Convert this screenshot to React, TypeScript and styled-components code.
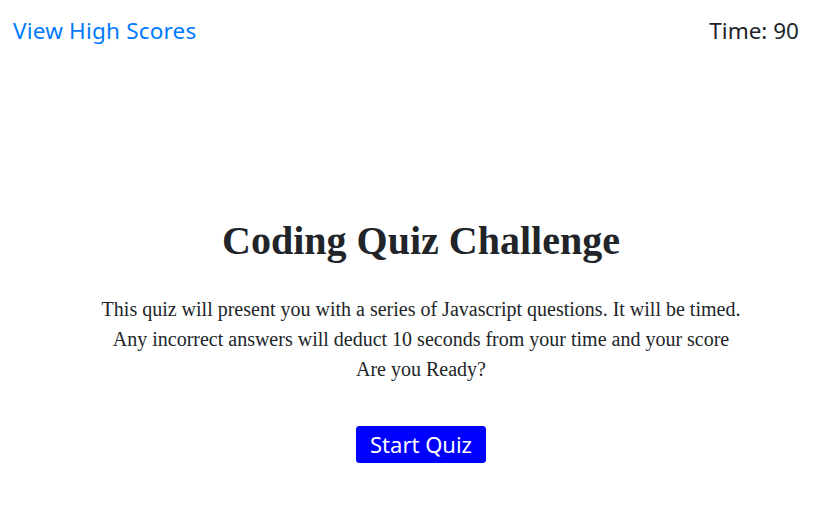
import React from "react";
import styled, { createGlobalStyle } from "styled-components";

const Global = createGlobalStyle`
  html, body { margin: 0; padding: 0; background: #fff; }
  body { font-family: "Liberation Serif", serif; color: #212529; }
`;

const Page = styled.div`
  width: 828px;
  height: 510px;
  display: flex;
  flex-direction: column;
`;

const Header = styled.header`
  display: flex;
  justify-content: space-between;
  align-items: center;
  padding: 15px 29px 0 13px;
  height: 30px;
  font-family: "Noto Sans", sans-serif;
  font-size: 22.5px;
`;

const HighScores = styled.a`
  color: #007bff;
  text-decoration: none;
  cursor: pointer;
  letter-spacing: 0.2px;
`;

const Timer = styled.div`
  color: #212529;
`;

const Main = styled.main`
  display: flex;
  flex-direction: column;
  align-items: center;
  padding: 172px 0 0 14px;
`;

const Title = styled.h1`
  margin: 0;
  font-family: "Liberation Serif", serif;
  font-weight: bold;
  font-size: 40px;
  line-height: 48px;
`;

const Intro = styled.p`
  margin: 29px 0 0;
  text-align: center;
  font-size: 20px;
  line-height: 30px;
`;

const StartButton = styled.button`
  margin-top: 42px;
  background: #0000ff;
  color: #fff;
  border: 1px solid #0000ff;
  border-radius: 3px;
  font-family: "Noto Sans", sans-serif;
  font-size: 22px;
  line-height: 35px;
  padding: 0 13px;
  cursor: pointer;
`;

export default function App() {
  return (
    <>
      <Global />
      <Page>
        <Header>
          <HighScores>View High Scores</HighScores>
          <Timer>Time: 90</Timer>
        </Header>
        <Main>
          <Title>Coding Quiz Challenge</Title>
          <Intro>
            This quiz will present you with a series of Javascript questions. It will be timed.
            <br />
            Any incorrect answers will deduct 10 seconds from your time and your score
            <br />
            Are you Ready?
          </Intro>
          <StartButton>Start Quiz</StartButton>
        </Main>
      </Page>
    </>
  );
}
